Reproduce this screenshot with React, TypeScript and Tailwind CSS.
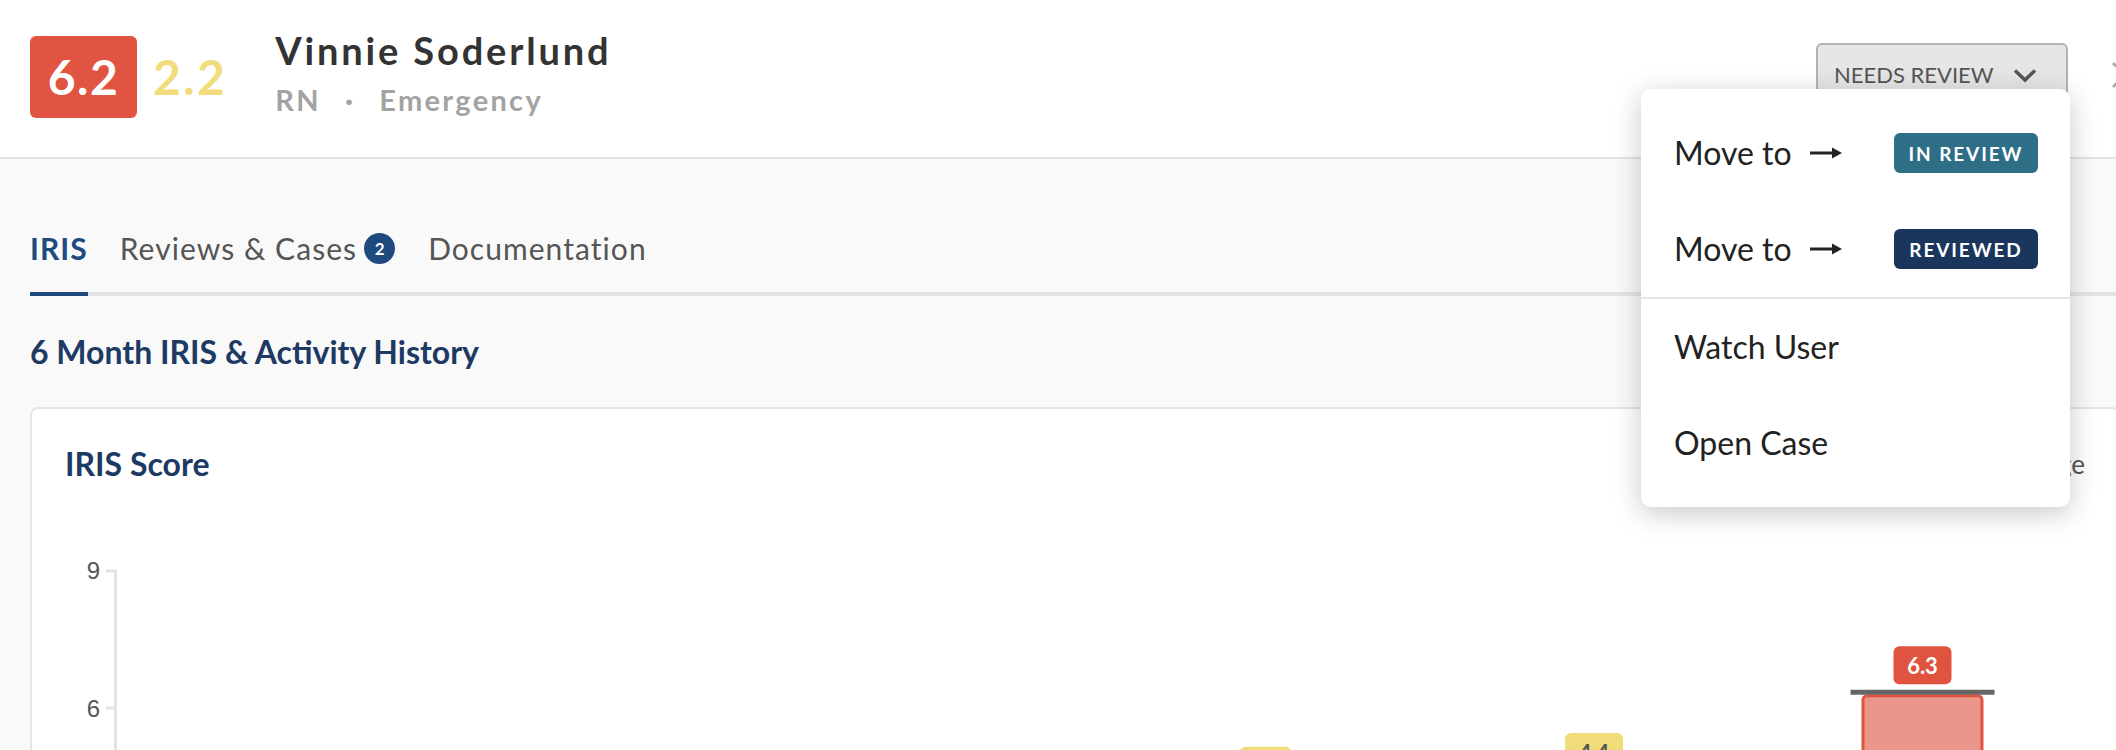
import React from 'react';

type Bar = { value: number; label: string; labelWidth: number; tone: 'red' | 'yellow' };

const bars: Bar[] = [
  { value: 3.1, label: '3.1', labelWidth: 52, tone: 'yellow' },
  { value: 2.8, label: '2.8', labelWidth: 58, tone: 'yellow' },
  { value: 3.6, label: '3.6', labelWidth: 58, tone: 'yellow' },
  { value: 4.1, label: '4.1', labelWidth: 52, tone: 'yellow' },
  { value: 4.4, label: '4.4', labelWidth: 58, tone: 'yellow' },
  { value: 6.3, label: '6.3', labelWidth: 58, tone: 'red' },
];

// chart space: y for value 6 sits at 220, one point is 45.67px
const yFor = (v: number) => 220 - (v - 6) * 45.67;

const Arrow = () => (
  <svg width="32" height="12" viewBox="0 0 32 12" className="ml-[18px]">
    <line x1="0" y1="6" x2="24" y2="6" stroke="#222" strokeWidth="3" />
    <polygon points="22,0.5 32,6 22,11.5" fill="#222" />
  </svg>
);

const Chart = () => (
  <svg width="2020" height="320" className="block">
    <line x1="50.5" y1="82" x2="50.5" y2="320" stroke="#e3e3e3" strokeWidth="3" />
    {[9, 6, 3].map((t) => (
      <g key={t}>
        <line x1="41" y1={yFor(t)} x2="52" y2={yFor(t)} stroke="#e3e3e3" strokeWidth="3" />
        <text
          x="35"
          y={yFor(t)}
          textAnchor="end"
          dominantBaseline="central"
          fontSize="24"
          fill="#555"
          fontFamily="Liberation Sans, Arial, sans-serif"
        >
          {t}
        </text>
      </g>
    ))}
    {bars.map((b, i) => {
      const cx = 215 + i * 328.5;
      const top = yFor(b.value);
      const red = b.tone === 'red';
      return (
        <g key={i}>
          <rect
            x={cx - 59.5}
            y={top + 1.5}
            width="119"
            height="400"
            rx="4"
            fill={red ? '#eb968a' : '#f7edb5'}
            stroke={red ? '#e0533f' : '#f0dc78'}
            strokeWidth="3"
          />
          {red && <line x1={cx - 72} y1={top - 2} x2={cx + 72} y2={top - 2} stroke="#666" strokeWidth="5" />}
          <rect
            x={cx - b.labelWidth / 2}
            y={top - 48}
            width={b.labelWidth}
            height="38"
            rx="6"
            fill={red ? '#e0533f' : '#f0dd7a'}
          />
          <text
            x={cx}
            y={top - 29}
            textAnchor="middle"
            dominantBaseline="central"
            fontSize="22"
            fontWeight="700"
            fill={red ? '#fff' : '#555'}
            fontFamily="Lato, sans-serif"
          >
            {b.label}
          </text>
        </g>
      );
    })}
  </svg>
);

const MenuRow = ({ children }: { children: React.ReactNode }) => (
  <div className="h-[96px] flex items-center justify-between pl-[33px] pr-[32px] text-[32px] leading-none text-[#222]">
    {children}
  </div>
);

export default function App() {
  return (
    <div className="w-full h-[750px] overflow-hidden bg-[#f9f9f9] [font-family:Lato,sans-serif]">
      <div className="relative w-[2150px]">
        {/* Header */}
        <header className="h-[159px] bg-white border-b-2 border-[#e3e3e3] flex items-start pl-[30px] pr-[11px] pt-[31px]">
          <div className="flex items-center mt-[5px]">
            <div className="w-[107px] h-[82px] rounded-[6px] bg-[#e05441] flex items-center justify-center text-white text-[48px] font-bold leading-none tracking-[0.03em]">
              6.2
            </div>
            <div className="ml-[16px] text-[48px] font-bold leading-none tracking-[0.05em] text-[#f1dd7b]">2.2</div>
          </div>
          <div className="ml-[48px] flex flex-col">
            <div className="text-[38px] font-bold leading-none tracking-[0.075em] text-[#333]">Vinnie Soderlund</div>
            <div className="mt-[16px] flex items-center text-[29px] font-bold leading-none tracking-[0.08em] text-[#a3a3a3]">
              <span>RN</span>
              <span className="mx-[24px]">·</span>
              <span>Emergency</span>
            </div>
          </div>
          <div className="ml-auto mt-[12px] flex items-center">
            <div className="w-[252px] h-[64px] rounded-[6px] border-2 border-[#b3b3b3] bg-[#e6e6e6] flex items-center justify-between pl-[16px] pr-[29px] text-[22px] leading-none text-[#555]">
              <span>NEEDS REVIEW</span>
              <svg width="24" height="15" viewBox="0 0 24 15">
                <polyline points="2,2.5 12,12 22,2.5" fill="none" stroke="#555" strokeWidth="3.5" />
              </svg>
            </div>
            <svg width="28" height="28" viewBox="0 0 28 28" className="ml-[43px]">
              <line x1="2" y1="2" x2="26" y2="26" stroke="#aaa" strokeWidth="3" />
              <line x1="26" y1="2" x2="2" y2="26" stroke="#aaa" strokeWidth="3" />
            </svg>
          </div>
        </header>

        {/* Content */}
        <div className="px-[30px] pt-[71px]">
          <div className="flex border-b-4 border-[#e5e5e5] text-[30px] leading-[36px] tracking-[0.035em]">
            <div className="pb-[26px] -mb-[4px] border-b-4 border-[#1e4a80] font-bold text-[#1e4a80]">IRIS</div>
            <div className="ml-[32px] pb-[26px] -mb-[4px] border-b-4 border-transparent flex items-center text-[#555]">
              Reviews &amp; Cases
              <span className="ml-[7px] w-[31px] h-[31px] rounded-full bg-[#1e4a80] text-white text-[17px] font-bold leading-none tracking-normal flex items-center justify-center">
                2
              </span>
            </div>
            <div className="ml-[33px] pb-[26px] -mb-[4px] border-b-4 border-transparent text-[#555]">Documentation</div>
          </div>

          <h2 className="mt-[36px] text-[32px] leading-[40px] font-bold text-[#1d3a64]">6 Month IRIS &amp; Activity History</h2>

          <div className="mt-[35px] h-[600px] bg-white border-2 border-[#e5e5e5] rounded-[8px] px-[33px] pt-[31px]">
            <div className="h-[48px] flex items-center justify-between">
              <span className="text-[32px] font-bold text-[#1d3a64]">IRIS Score</span>
              <span className="flex items-center text-[26px] text-[#555]">
                <span className="w-[26px] h-[4px] bg-[#666] mr-[10px]" />
                Peer Average
              </span>
            </div>
            <Chart />
          </div>
        </div>

        {/* Status menu */}
        <div className="absolute left-[1641px] top-[89px] w-[429px] bg-white rounded-[10px] shadow-[0_6px_28px_rgba(0,0,0,0.22)] py-[16px]">
          <MenuRow>
            <span className="flex items-center">Move to<Arrow /></span>
            <span className="w-[144px] h-[40px] rounded-[6px] bg-[#2f6e87] text-white text-[19px] font-bold tracking-[0.1em] flex items-center justify-center">
              IN REVIEW
            </span>
          </MenuRow>
          <MenuRow>
            <span className="flex items-center">Move to<Arrow /></span>
            <span className="w-[144px] h-[40px] rounded-[6px] bg-[#1b365d] text-white text-[19px] font-bold tracking-[0.1em] flex items-center justify-center">
              REVIEWED
            </span>
          </MenuRow>
          <div className="h-[2px] bg-[#e5e5e5]" />
          <MenuRow>Watch User</MenuRow>
          <MenuRow>Open Case</MenuRow>
        </div>
      </div>
    </div>
  );
}
